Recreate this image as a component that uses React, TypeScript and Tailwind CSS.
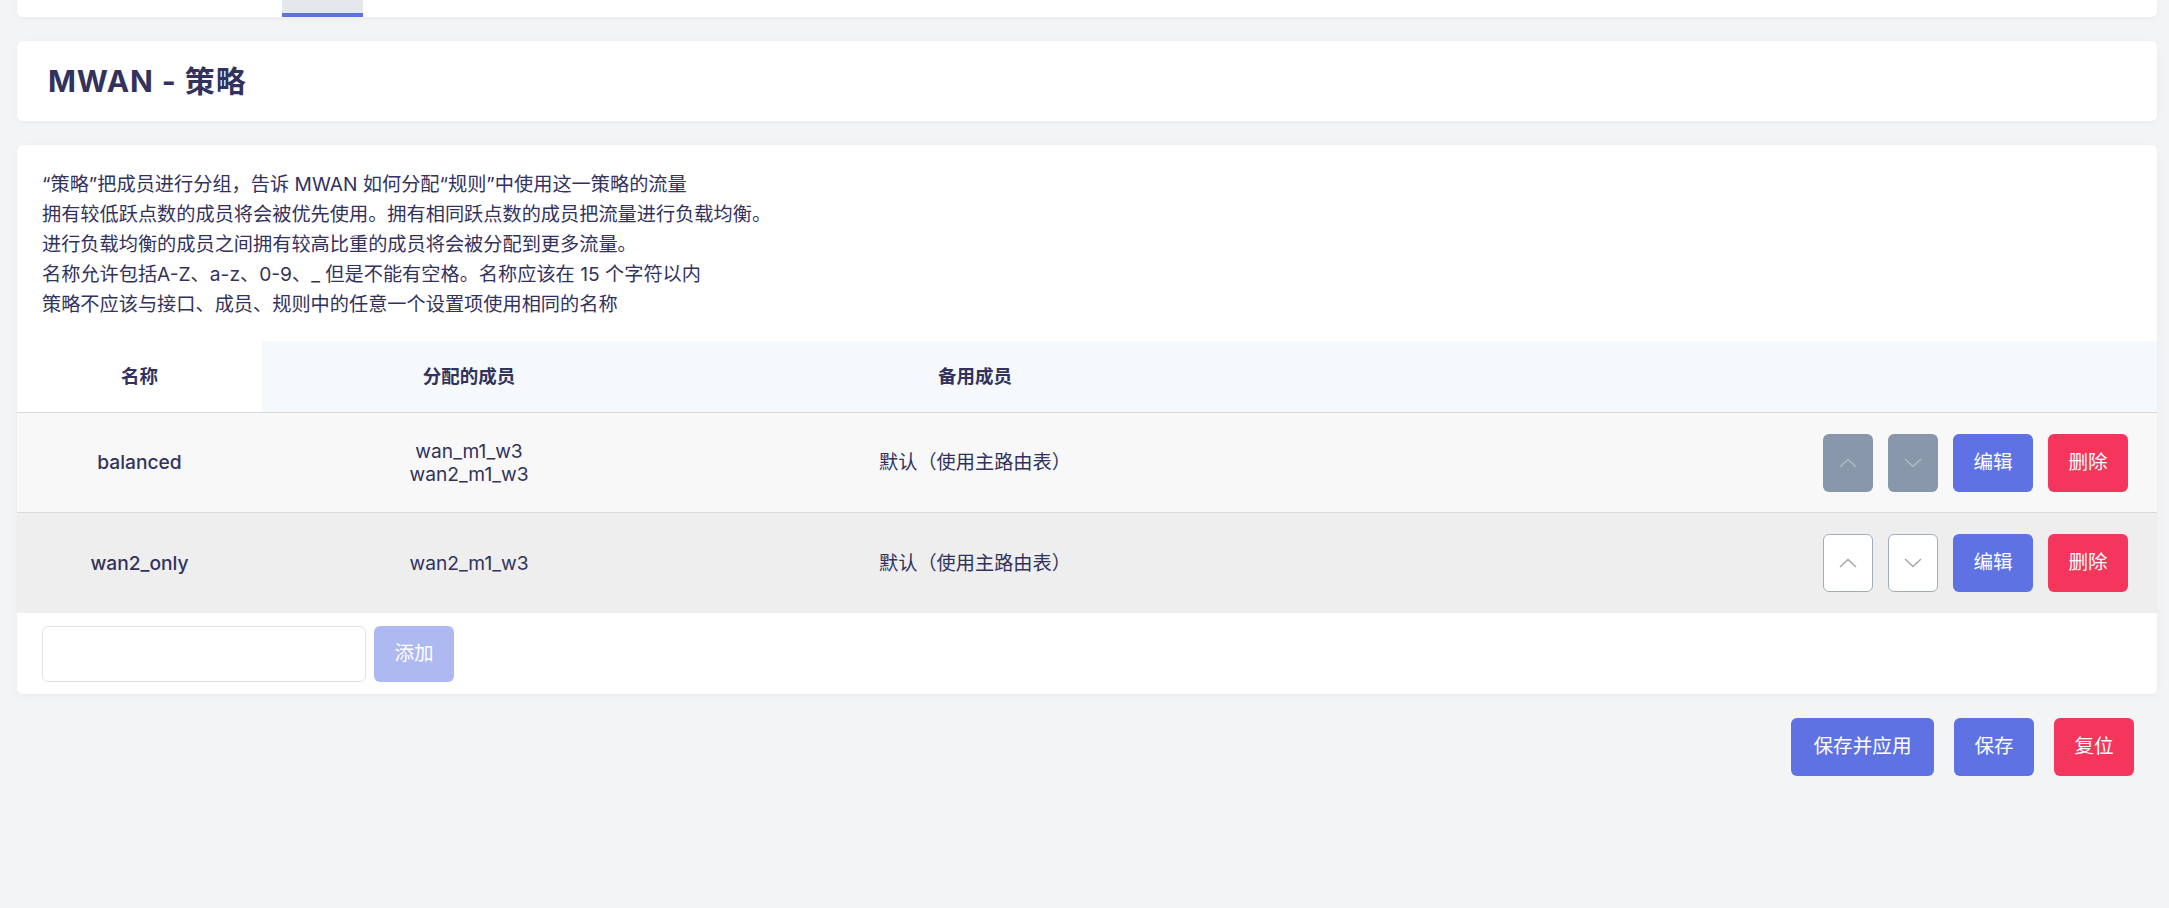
import React from "react";

function Chevron({ up, color }: { up: boolean; color: string }) {
  return (
    <svg width="18" height="10" viewBox="0 0 18 10" fill="none">
      <polyline
        points={up ? "1,9 9,1.5 17,9" : "1,1 9,8.5 17,1"}
        stroke={color}
        strokeWidth="1.4"
        fill="none"
      />
    </svg>
  );
}

function ArrowBtn({ up, disabled }: { up: boolean; disabled: boolean }) {
  return disabled ? (
    <div className="w-[50px] h-[58px] rounded-[6px] bg-[#8898aa] flex items-center justify-center">
      <Chevron up={up} color="#b3bac4" />
    </div>
  ) : (
    <div className="w-[50px] h-[58px] rounded-[6px] bg-white border border-[#a3adbd] flex items-center justify-center">
      <Chevron up={up} color="#a6a6a6" />
    </div>
  );
}

function Row({
  name,
  members,
  bg,
  border,
  disabled,
}: {
  name: string;
  members: string[];
  bg: string;
  border: boolean;
  disabled: boolean;
}) {
  return (
    <div
      className={
        "grid grid-cols-[245px_414px_598px_1fr] items-center " +
        (border ? "h-[100px] border-b border-[#dadada] " : "h-[100px] ") +
        bg
      }
    >
      <div className="text-center font-medium">{name}</div>
      <div className="text-center leading-[23px]">
        {members.map((m) => (
          <div key={m}>{m}</div>
        ))}
      </div>
      <div className="text-center">默认（使用主路由表）</div>
      <div className="flex justify-end items-center gap-[15px] pr-[29px]">
        <ArrowBtn up={true} disabled={disabled} />
        <ArrowBtn up={false} disabled={disabled} />
        <button className="w-[80px] h-[58px] rounded-[6px] bg-[#5e72e4] text-white text-[19.6px]">编辑</button>
        <button className="w-[80px] h-[58px] rounded-[6px] bg-[#f5365c] text-white text-[19.6px]">删除</button>
      </div>
    </div>
  );
}

export default function App() {
  return (
    <div className="h-[908px] overflow-hidden bg-[#f3f4f6] pl-[17px] pr-[12px] font-[Inter,'Noto_Sans_CJK_SC',sans-serif] text-[#32325d] text-[19.2px]">
      <div className="h-[17px] bg-white rounded-b-[6px] shadow-[0_2px_8px_rgba(0,0,0,0.04)] flex pl-[265px]">
        <div className="w-[81px] flex flex-col">
          <div className="flex-1 bg-[#e4e7eb]" />
          <div className="h-[4px] bg-[#5e72e4]" />
        </div>
      </div>

      <div className="mt-[24px] h-[80px] bg-white rounded-[6px] shadow-[0_2px_8px_rgba(0,0,0,0.04)] flex items-center pl-[31px]">
        <h2 className="text-[30px] font-bold tracking-[0.03em] text-[#32325d]">MWAN - 策略</h2>
      </div>

      <div className="mt-[24px] bg-white rounded-[6px] shadow-[0_2px_8px_rgba(0,0,0,0.04)] overflow-hidden">
        <div className="pt-[24px] pl-[25px] leading-[30px]">
          <div>“策略”把成员进行分组，告诉 MWAN 如何分配“规则”中使用这一策略的流量</div>
          <div>拥有较低跃点数的成员将会被优先使用。拥有相同跃点数的成员把流量进行负载均衡。</div>
          <div>进行负载均衡的成员之间拥有较高比重的成员将会被分配到更多流量。</div>
          <div>名称允许包括A-Z、a-z、0-9、_ 但是不能有空格。名称应该在 15 个字符以内</div>
          <div>策略不应该与接口、成员、规则中的任意一个设置项使用相同的名称</div>
        </div>

        <div className="mt-[22px]">
          <div className="grid grid-cols-[245px_1fr] h-[72px] border-b border-[#dadada] text-[18.5px] font-bold">
            <div className="bg-white flex items-center justify-center">名称</div>
            <div className="bg-[#f6f9fc] grid grid-cols-[414px_598px_1fr] items-center">
              <div className="text-center">分配的成员</div>
              <div className="text-center">备用成员</div>
              <div />
            </div>
          </div>
          <Row
            name="balanced"
            members={["wan_m1_w3", "wan2_m1_w3"]}
            bg="bg-[#f8f8f8]"
            border={true}
            disabled={true}
          />
          <Row
            name="wan2_only"
            members={["wan2_m1_w3"]}
            bg="bg-[#eeeeee]"
            border={false}
            disabled={false}
          />
        </div>

        <div className="flex items-center gap-[8px] pl-[25px] pt-[13px] pb-[12px]">
          <input className="w-[324px] h-[56px] rounded-[6px] border border-[#dee2e6] bg-white outline-none" />
          <button className="w-[80px] h-[56px] rounded-[6px] bg-[#aeb8f1] text-white text-[19.6px]">添加</button>
        </div>
      </div>

      <div className="mt-[24px] flex justify-end gap-[20px] pr-[23px]">
        <button className="w-[143px] h-[58px] rounded-[6px] bg-[#5e72e4] text-white text-[19.6px]">保存并应用</button>
        <button className="w-[80px] h-[58px] rounded-[6px] bg-[#5e72e4] text-white text-[19.6px]">保存</button>
        <button className="w-[80px] h-[58px] rounded-[6px] bg-[#f5365c] text-white text-[19.6px]">复位</button>
      </div>
    </div>
  );
}
